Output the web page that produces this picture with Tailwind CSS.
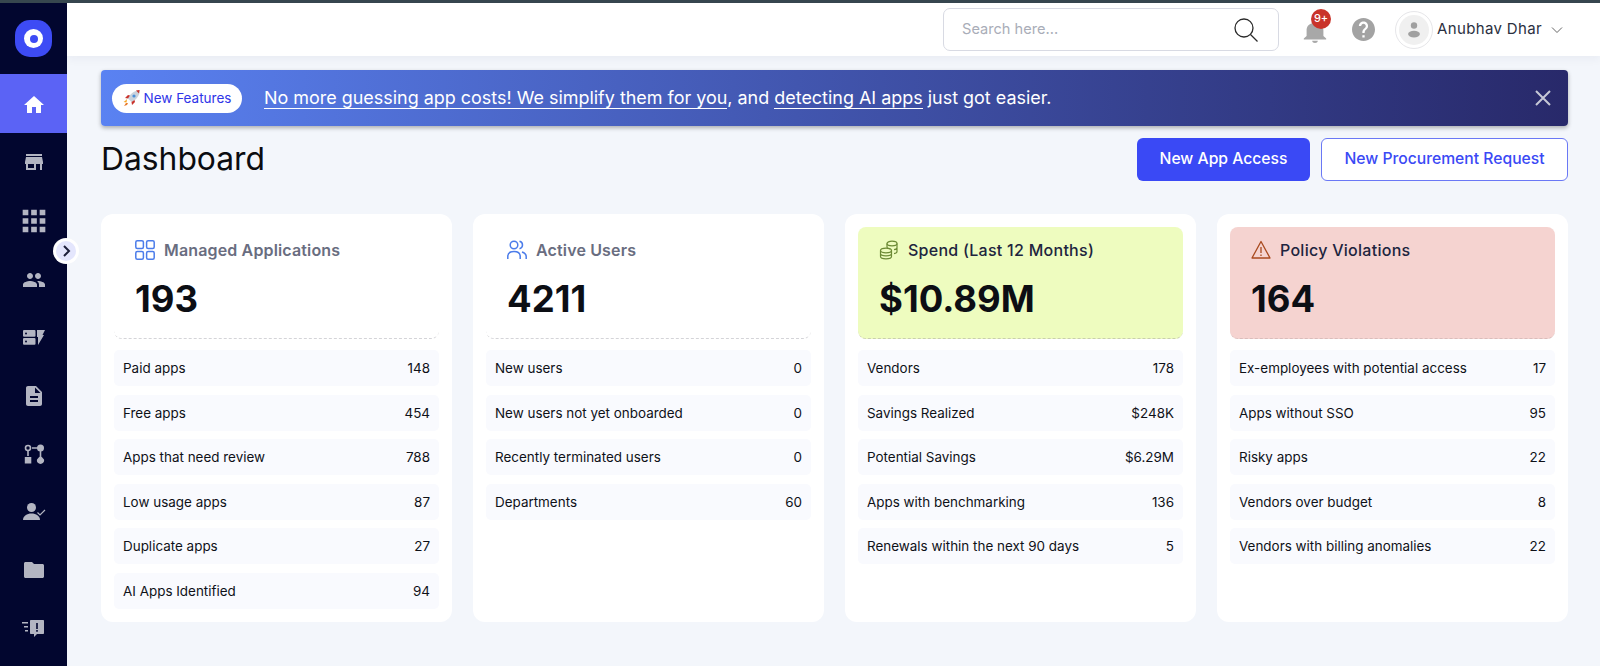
<!DOCTYPE html>
<html><head><meta charset="utf-8">
<script src="https://cdn.jsdelivr.net/npm/@tailwindcss/browser@4"></script>
</head>
<body class="m-0 h-[666px] w-[1600px] overflow-hidden bg-[#f3f6fb] font-['Inter','Liberation_Sans',sans-serif]">
<div class="h-[3px] bg-[#37474f]"></div>
<div class="flex h-[663px]">
  <aside class="relative flex w-[67px] shrink-0 flex-col bg-[#02062f] text-[#b3b5c2]">
    <div class="flex h-[71px] items-center justify-center">
      <div class="flex h-[37px] w-[37px] items-center justify-center rounded-[15px] bg-[#3d4bf5]">
        <div class="flex h-[19px] w-[19px] items-center justify-center rounded-full bg-white"><div class="h-[8px] w-[8px] rounded-full bg-[#3d4bf5]"></div></div>
      </div>
    </div>
    <div class="flex h-[59px] items-center justify-center bg-[#5b63f5] pt-[2px] text-white"><svg class="h-[24px] w-[24px] fill-current" viewBox="0 0 24 24"><path d="M10 20v-6h4v6h5v-8h3L12 3 2 12h3v8z"/></svg></div>
    <div class="flex h-[58px] items-center justify-center"><svg class="h-[24px] w-[24px] fill-current" viewBox="0 0 24 24"><path d="M20 4H4v2h16V4zm1 10v-2l-1-5H4l-1 5v2h1v6h10v-6h4v6h2v-6h1zm-9 4H6v-4h6v4z"/></svg></div>
    <div class="flex h-[60px] items-center justify-center"><svg class="h-[34px] w-[34px] fill-current" viewBox="0 0 24 24"><path d="M4 8h4V4H4v4zm6 12h4v-4h-4v4zm-6 0h4v-4H4v4zm0-6h4v-4H4v4zm6 0h4v-4h-4v4zm6-10v4h4V4h-4zm-6 4h4V4h-4v4zm6 6h4v-4h-4v4zm0 6h4v-4h-4v4z"/></svg></div>
    <div class="flex h-[58px] items-center justify-center"><svg class="h-[24px] w-[24px] fill-current" viewBox="0 0 24 24"><path d="M16 11c1.660 0 2.990-1.340 2.990-3S17.660 5 16 5c-1.660 0-3 1.340-3 3s1.340 3 3 3zm-8 0c1.660 0 2.990-1.340 2.990-3S9.660 5 8 5C6.340 5 5 6.340 5 8s1.340 3 3 3zm0 2c-2.330 0-7 1.170-7 3.500V19h14v-2.500c0-2.330-4.670-3.500-7-3.500zm8 0c-.29 0-.62.02-.97.05 1.160.84 1.970 1.970 1.970 3.450V19h6v-2.500c0-2.330-4.670-3.500-7-3.500z"/></svg></div>
    <div class="flex h-[58px] items-center justify-center"><svg class="h-[16px] w-[22px] fill-current" viewBox="0 0 22 16"><rect x="0" y="0" width="12.500" height="6.800" rx="1"/><rect x="0" y="8" width="12.500" height="6.800" rx="1"/><circle cx="3" cy="3.400" r="1" fill="#02062f"/><circle cx="3" cy="11.400" r="1" fill="#02062f"/><path d="M14 0h8l-2.500 5H21l-6 10V7h-1z"/></svg></div>
    <div class="flex h-[58px] items-center justify-center"><svg class="h-[24px] w-[24px] fill-current" viewBox="0 0 24 24"><path d="M14 2H6c-1.100 0-1.990.9-1.990 2L4 20c0 1.100.89 2 1.990 2H18c1.100 0 2-.9 2-2V8l-6-6zm2 16H8v-2h8v2zm0-4H8v-2h8v2zm-3-5V3.500L18.500 9H13z"/></svg></div>
    <div class="flex h-[58px] items-center justify-center"><svg class="h-[22px] w-[22px] fill-current" viewBox="0 0 22 22"><circle cx="5" cy="5" r="2.500" fill="none" stroke="currentColor" stroke-width="1.600"/><path d="M4.200 8h1.600v5H4.200zM1.800 14h6.500v6.500H1.800zM9 4.200h6v1.600H9z"/><circle cx="17.500" cy="5" r="3.500"/><path d="M16.700 8h1.600v5h-1.600z"/><path d="M17.500 12.500L21 16.500a3.600 3.600 0 1 1-7 0z"/></svg></div>
    <div class="flex h-[58px] items-center justify-center"><svg class="h-[24px] w-[24px] fill-current" viewBox="0 0 24 24"><circle cx="9.500" cy="7.500" r="4.500"/><path d="M1 20c0-4 4-6.500 8.500-6.500S18 16 18 20z"/><path d="M15.500 12.500l2.500 2.500 5-5" fill="none" stroke="currentColor" stroke-width="1.200"/></svg></div>
    <div class="flex h-[58px] items-center justify-center"><svg class="h-[24px] w-[24px] fill-current" viewBox="0 0 24 24"><path d="M10 4H3.500C2.700 4 2 4.700 2 5.500v13C2 19.300 2.700 20 3.500 20h17c.8 0 1.500-.7 1.500-1.500V7.500C22 6.700 21.300 6 20.500 6H12z"/></svg></div>
    <div class="flex h-[58px] items-center justify-center"><svg class="h-[24px] w-[24px] fill-current" viewBox="0 0 24 24"><path d="M9 4h12c.6 0 1 .4 1 1v12c0 .6-.4 1-1 1h-6l-3 3v-3H9c-.6 0-1-.4-1-1V5c0-.6.4-1 1-1z"/><path d="M14.200 7h1.600v6h-1.600zM14.200 14h1.600v1.700h-1.600z" fill="#02062f"/><path d="M0 6h6v1.400H0zM2 10h4v1.400H2zM3 14h3v1.400H3z"/></svg></div>
    <div class="absolute left-[53px] top-[235px] flex h-[26px] w-[26px] items-center justify-center rounded-full bg-white">
      <div class="flex h-[20px] w-[20px] items-center justify-center rounded-full bg-[#e4e6fd]"><svg class="h-[14px] w-[14px]" viewBox="0 0 14 14" fill="none" stroke="#1c1f3a" stroke-width="2"><path d="M5 2l5 5-5 5"/></svg></div>
    </div>
  </aside>
  <div class="flex min-w-0 flex-1 flex-col">
    <header class="flex h-[53px] shrink-0 items-center justify-end bg-white pr-[37px] shadow-[0_2px_10px_rgba(30,40,90,0.06)]">
      <div class="flex h-[43px] w-[336px] items-center justify-between rounded-[7px] border border-[#d8dae3] pl-[18px] pr-[19px]">
        <span class="text-[14.600px] text-[#a9adb8]">Search here...</span>
        <svg class="h-[26px] w-[26px]" viewBox="0 0 26 26" fill="none" stroke="#2a2a2a" stroke-width="1.300"><circle cx="11" cy="11" r="9"/><path d="M17.500 17.500l7 7"/></svg>
      </div>
      <div class="relative ml-[22px] h-[30px] w-[28px]">
        <svg class="absolute left-0 top-[5px] h-[23px] w-[28px] fill-[#a8a8a8]" viewBox="2 2 20 20" preserveAspectRatio="none"><path d="M12 22c1.100 0 2-.9 2-2h-4c0 1.100.89 2 2 2zm6-6v-5c0-3.070-1.640-5.640-4.500-6.320V4c0-.83-.67-1.500-1.500-1.500s-1.500.67-1.500 1.500v.68C7.630 5.360 6 7.920 6 11v5l-2 2v1h16v-1l-2-2z"/></svg>
        <span class="absolute left-[10px] top-[-6px] flex h-[20px] w-[20px] items-center justify-center rounded-full bg-[#c9332a] text-[11px] font-medium text-white">9+</span>
      </div>
      <svg class="ml-[23px] h-[23px] w-[23px] fill-[#a3a3a3]" viewBox="2 2 20 20"><path d="M12 2C6.480 2 2 6.480 2 12s4.480 10 10 10 10-4.480 10-10S17.520 2 12 2zm1 17h-2v-2h2v2zm2.070-7.750l-.9.92C13.450 12.900 13 13.500 13 15h-2v-.5c0-1.100.45-2.100 1.170-2.830l1.240-1.260c.37-.36.59-.86.59-1.410 0-1.100-.9-2-2-2s-2 .9-2 2H8c0-2.210 1.790-4 4-4s4 1.790 4 4c0 .88-.36 1.680-.93 2.250z"/></svg>
      <div class="ml-[20px] flex h-[38px] w-[38px] items-center justify-center rounded-full border-[1.500px] border-[#e6e6e9] bg-white">
        <div class="flex h-[30px] w-[30px] items-center justify-center rounded-full bg-[#f0f0f0]">
          <svg class="h-[20px] w-[20px] fill-[#a0a0a0]" viewBox="0 0 22 22"><circle cx="11" cy="6" r="3.500"/><ellipse cx="11" cy="15.500" rx="6.500" ry="3.800"/></svg>
        </div>
      </div>
      <span class="ml-[4px] text-[15px] tracking-[0.35px] text-[#2b3040]">Anubhav Dhar</span>
      <svg class="ml-[9px] h-[12px] w-[12px]" viewBox="0 0 12 12" fill="none" stroke="#666" stroke-width="1"><path d="M1 3.500l5 5 5-5"/></svg>
    </header>
    <main class="flex-1 pl-[34px] pr-[32px] pt-[14px]">
      <div class="flex h-[56px] items-center rounded-[4px] bg-gradient-to-r from-[#5a82f2] to-[#28296a] pl-[11px] pr-[16px] shadow-[0_2px_4px_rgba(0,0,0,0.3)]">
        <div class="flex h-[29px] w-[130px] items-center justify-center gap-[3px] rounded-full bg-white">
          <svg class="h-[18px] w-[18px]" viewBox="0 0 18 18"><path d="M4 10L2 12l-1.500 1 3 .5z" fill="#f5a623"/><path d="M3 14l-2 3 3-1 1-2z" fill="#e8792b"/><path d="M5 9.500C7 5 11 1.500 17 1c-.5 6-4 10-8.500 12z" fill="#c9d3dc"/><path d="M13 1.500l3.500-.5-.5 3.500z" fill="#c8332c"/><circle cx="11" cy="7" r="1.600" fill="#4a90d9"/><path d="M5 9.500L2 9l3-3 2 .5zM8.500 13l.5 3 3-3-.5-2z" fill="#c8332c"/></svg>
          <span class="text-[13.500px] font-normal text-[#2f35e8]">New Features</span>
        </div>
        <p class="ml-[22px] flex-1 text-[17.950px] text-white"><span class="border-b-[1.500px] border-white">No more guessing app costs! We simplify them for you</span>, and <span class="border-b-[1.500px] border-white">detecting AI apps</span> just got easier.</p>
        <svg class="h-[18px] w-[18px]" viewBox="0 0 18 18" fill="none" stroke="#c6c8d6" stroke-width="2"><path d="M2 2l14 14M16 2L2 16"/></svg>
      </div>
      <div class="mt-[11px] flex h-[44px] items-center justify-between">
        <h1 class="text-[31.800px] font-normal leading-none text-[#0b0c10]">Dashboard</h1>
        <div class="flex gap-[11px]">
          <button class="flex h-[43px] w-[173px] items-center justify-center rounded-[6px] bg-[#3a49f5] text-[15.700px] font-medium text-white">New App Access</button>
          <button class="flex h-[43px] w-[247px] items-center justify-center rounded-[6px] border-[1.500px] border-[#6a78f5] bg-white text-[15.700px] font-medium text-[#3a49f5]">New Procurement Request</button>
        </div>
      </div>
      <div class="mt-[33px] grid grid-cols-4 gap-[21px]">
        <section class="h-[408px] rounded-[12px] bg-white px-[13px] pt-[13px]">
          <div class="h-[112px] rounded-b-[8px] border-b border-dashed border-[#d4d4d8] pl-[21px] pt-[13px]">
            <div class="flex h-[20px] items-center gap-[9px]">
              <svg class="h-[20px] w-[20px]" viewBox="0 0 20 20" fill="none" stroke="#4b7cea" stroke-width="1.500"><rect x=".8" y=".8" width="7.600" height="7.600" rx="1.500"/><rect x="11.600" y=".8" width="7.600" height="7.600" rx="1.500"/><rect x=".8" y="11.600" width="7.600" height="7.600" rx="1.500"/><rect x="11.600" y="11.600" width="7.600" height="7.600" rx="1.500"/></svg>
              <span class="text-[16px] font-semibold tracking-[0.15px] text-[#696d80]">Managed Applications</span>
            </div>
            <div class="mt-[17px] text-[36.500px] font-bold leading-[44px] text-[#0c0e14]">193</div>
          </div>
          <div class="mt-[11px] flex flex-col gap-[8.600px] text-[13.450px] text-[#0f1118]">
            <div class="flex h-[36px] items-center justify-between rounded-[5px] bg-[#f9fafe] px-[9px]"><span>Paid apps</span><span>148</span></div>
            <div class="flex h-[36px] items-center justify-between rounded-[5px] bg-[#f9fafe] px-[9px]"><span>Free apps</span><span>454</span></div>
            <div class="flex h-[36px] items-center justify-between rounded-[5px] bg-[#f9fafe] px-[9px]"><span>Apps that need review</span><span>788</span></div>
            <div class="flex h-[36px] items-center justify-between rounded-[5px] bg-[#f9fafe] px-[9px]"><span>Low usage apps</span><span>87</span></div>
            <div class="flex h-[36px] items-center justify-between rounded-[5px] bg-[#f9fafe] px-[9px]"><span>Duplicate apps</span><span>27</span></div>
            <div class="flex h-[36px] items-center justify-between rounded-[5px] bg-[#f9fafe] px-[9px]"><span>AI Apps Identified</span><span>94</span></div>
          </div>
        </section>
        <section class="h-[408px] rounded-[12px] bg-white px-[13px] pt-[13px]">
          <div class="h-[112px] rounded-b-[8px] border-b border-dashed border-[#d4d4d8] pl-[21px] pt-[13px]">
            <div class="flex h-[20px] items-center gap-[9px]">
              <svg class="h-[20px] w-[20px]" viewBox="0 0 20 20" fill="none" stroke="#4b7cea" stroke-width="1.500"><circle cx="7" cy="5" r="3.800"/><path d="M.8 19v-2.500c0-3 2.500-5 6.200-5s6.200 2 6.200 5V19"/><path d="M12.500 1.300c2 .5 3 2 3 3.700s-1 3.200-3 3.700M15 12c2.500.8 4.200 2.500 4.200 4.500V19"/></svg>
              <span class="text-[16px] font-semibold tracking-[0.15px] text-[#696d80]">Active Users</span>
            </div>
            <div class="mt-[17px] text-[36.500px] font-bold leading-[44px] text-[#0c0e14]">4211</div>
          </div>
          <div class="mt-[11px] flex flex-col gap-[8.600px] text-[13.450px] text-[#0f1118]">
            <div class="flex h-[36px] items-center justify-between rounded-[5px] bg-[#f9fafe] px-[9px]"><span>New users</span><span>0</span></div>
            <div class="flex h-[36px] items-center justify-between rounded-[5px] bg-[#f9fafe] px-[9px]"><span>New users not yet onboarded</span><span>0</span></div>
            <div class="flex h-[36px] items-center justify-between rounded-[5px] bg-[#f9fafe] px-[9px]"><span>Recently terminated users</span><span>0</span></div>
            <div class="flex h-[36px] items-center justify-between rounded-[5px] bg-[#f9fafe] px-[9px]"><span>Departments</span><span>60</span></div>
          </div>
        </section>
        <section class="h-[408px] rounded-[12px] bg-white px-[13px] pt-[13px]">
          <div class="h-[112px] rounded-[8px] border-b border-dashed border-[#c9cfae] bg-[#eefcbf] pl-[21px] pt-[13px]">
            <div class="flex h-[20px] items-center gap-[9px]">
              <svg class="h-[20px] w-[20px]" viewBox="0 0 20 20" fill="none" stroke="#6c8a35" stroke-width="1.200"><ellipse cx="13" cy="3.500" rx="5" ry="2.300"/><path d="M8 3.500v4M18 3.500v8c0 1-1 1.800-3 2.100M18 7.500c0 1-1 2-3 2.200M8 7.500c.5.700 1.500 1.200 3 1.500"/><ellipse cx="7" cy="10.500" rx="5.500" ry="2.300"/><path d="M1.500 10.500v6c0 1.300 2.500 2.300 5.500 2.300s5.500-1 5.500-2.300v-6M1.500 13.500c0 1.300 2.500 2.300 5.500 2.300s5.500-1 5.500-2.300"/></svg>
              <span class="text-[16px] font-medium tracking-[0.27px] text-[#20243e]">Spend (Last 12 Months)</span>
            </div>
            <div class="mt-[17px] text-[36.500px] font-bold leading-[44px] text-[#0c0e14]">$10.89M</div>
          </div>
          <div class="mt-[11px] flex flex-col gap-[8.600px] text-[13.450px] text-[#0f1118]">
            <div class="flex h-[36px] items-center justify-between rounded-[5px] bg-[#f9fafe] px-[9px]"><span>Vendors</span><span>178</span></div>
            <div class="flex h-[36px] items-center justify-between rounded-[5px] bg-[#f9fafe] px-[9px]"><span>Savings Realized</span><span>$248K</span></div>
            <div class="flex h-[36px] items-center justify-between rounded-[5px] bg-[#f9fafe] px-[9px]"><span>Potential Savings</span><span>$6.29M</span></div>
            <div class="flex h-[36px] items-center justify-between rounded-[5px] bg-[#f9fafe] px-[9px]"><span>Apps with benchmarking</span><span>136</span></div>
            <div class="flex h-[36px] items-center justify-between rounded-[5px] bg-[#f9fafe] px-[9px]"><span>Renewals within the next 90 days</span><span>5</span></div>
          </div>
        </section>
        <section class="h-[408px] rounded-[12px] bg-white px-[13px] pt-[13px]">
          <div class="h-[112px] rounded-[8px] border-b border-dashed border-[#d9bdbb] bg-[#f5d3d0] pl-[21px] pt-[13px]">
            <div class="flex h-[20px] items-center gap-[9px]">
              <svg class="h-[20px] w-[20px]" viewBox="0 0 20 20" fill="none" stroke="#a94a1f" stroke-width="1.300"><path d="M10 1.500L1 18h18z" stroke-linejoin="round"/><path d="M10 7v6M10 14.500v1.500"/></svg>
              <span class="text-[16px] font-medium tracking-[0.27px] text-[#20243e]">Policy Violations</span>
            </div>
            <div class="mt-[17px] text-[36.500px] font-bold leading-[44px] text-[#0c0e14]">164</div>
          </div>
          <div class="mt-[11px] flex flex-col gap-[8.600px] text-[13.450px] text-[#0f1118]">
            <div class="flex h-[36px] items-center justify-between rounded-[5px] bg-[#f9fafe] px-[9px]"><span>Ex-employees with potential access</span><span>17</span></div>
            <div class="flex h-[36px] items-center justify-between rounded-[5px] bg-[#f9fafe] px-[9px]"><span>Apps without SSO</span><span>95</span></div>
            <div class="flex h-[36px] items-center justify-between rounded-[5px] bg-[#f9fafe] px-[9px]"><span>Risky apps</span><span>22</span></div>
            <div class="flex h-[36px] items-center justify-between rounded-[5px] bg-[#f9fafe] px-[9px]"><span>Vendors over budget</span><span>8</span></div>
            <div class="flex h-[36px] items-center justify-between rounded-[5px] bg-[#f9fafe] px-[9px]"><span>Vendors with billing anomalies</span><span>22</span></div>
          </div>
        </section>
      </div>
    </main>
  </div>
</div>
</body></html>
